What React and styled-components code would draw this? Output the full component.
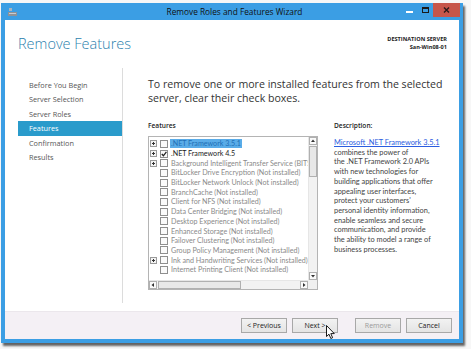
import React from 'react';
import styled, { createGlobalStyle } from 'styled-components';

const Global = createGlobalStyle`
  html, body {
    margin: 0;
    padding: 0;
    background: #ffffff;
    overflow: hidden;
  }
  body {
    font-family: "Open Sans", "Noto Sans", sans-serif;
  }
`;

const Screen = styled.div`
  width: 471px;
  height: 349px;
  padding: 3px 0 0 1px;
  box-sizing: border-box;
  background: #f7f7f7;
  position: relative;
`;

const Window = styled.div`
  width: 462px;
  height: 340px;
  background: #3b9ee4;
  padding: 0 4px 4px 4px;
  box-sizing: border-box;
  display: flex;
  flex-direction: column;
  box-shadow: 2px 3px 2px rgba(0, 0, 0, 0.6);
`;

const TitleBar = styled.div`
  height: 17px;
  display: flex;
  align-items: center;
  position: relative;
`;

const AppIcon = styled.div`
  width: 10px;
  display: flex;
  align-items: center;
  margin-left: 3px;
`;

const Title = styled.div`
  flex: 1;
  text-align: center;
  font-size: 8.3px;
  color: #111;
  padding-left: 50px;
`;

const Caption = styled.div`
  display: flex;
  align-items: flex-start;
  height: 100%;
  margin-right: -1px;
`;

const CaptionButton = styled.div`
  width: ${(p) => (p.$close ? '27px' : '16px')};
  height: 14px;
  display: flex;
  align-items: center;
  justify-content: center;
  background: ${(p) => (p.$close ? '#c7564a' : 'transparent')};
`;

const Client = styled.div`
  flex: 1;
  background: #fff;
  display: flex;
  flex-direction: column;
`;

const Header = styled.div`
  height: 48px;
  display: flex;
  justify-content: space-between;
  align-items: flex-start;
  padding: 0 12px 0 13px;
`;

const Heading = styled.h1`
  margin: 14px 0 0 0;
  font-weight: 300;
  font-size: 14.5px;
  color: #2c7fae;
`;

const Dest = styled.div`
  margin-top: 15px;
  text-align: right;
  font-size: 5.6px;
  font-weight: 700;
  color: #222;
  line-height: 8px;
`;

const Body = styled.div`
  flex: 1;
  display: flex;
`;

const Nav = styled.div`
  width: 104px;
  flex-shrink: 0;
  margin-left: 13px;
  padding-top: 10px;
  border-right: 1px solid #dcdcdc;
  margin-bottom: 8px;
`;

const NavItem = styled.div`
  height: 14.4px;
  line-height: 14.4px;
  padding-left: 11px;
  font-size: 7.3px;
  color: ${(p) => (p.$active ? '#fff' : '#555')};
  background: ${(p) => (p.$active ? '#2a9bcb' : 'transparent')};
`;

const Main = styled.div`
  flex: 1;
  min-width: 0;
  padding: 9px 0 0 25px;
`;

const Intro = styled.p`
  margin: 0;
  font-size: 10.6px;
  line-height: 14px;
  color: #333;
  width: 300px;
`;

const Columns = styled.div`
  display: flex;
  margin-top: 16px;
`;

const FeatureCol = styled.div`
  width: 170px;
  flex-shrink: 0;
`;

const Label = styled.div`
  font-size: 6.6px;
  font-weight: 600;
  color: #222;
  height: 15px;
`;

const TreeBox = styled.div`
  width: 170px;
  height: 154px;
  border: 1px solid #b4b4b4;
  box-sizing: border-box;
  display: grid;
  grid-template-columns: minmax(0, 1fr) 9px;
  grid-template-rows: minmax(0, 1fr) 9px;
  background: #fff;
`;

const TreeList = styled.div`
  overflow: hidden;
  padding: 2px 0 0 1px;
`;

const Row = styled.div`
  height: 9.7px;
  display: flex;
  align-items: center;
  white-space: nowrap;
  font-family: Lato, "Open Sans", sans-serif;
  font-size: 7.15px;
  color: ${(p) => (p.$dark ? '#1a1a1a' : '#8a8a8a')};
`;

const Expander = styled.div`
  width: 10px;
  flex-shrink: 0;
  display: flex;
  align-items: center;
`;

const Check = styled.div`
  width: 6px;
  height: 6px;
  flex-shrink: 0;
  border: 1px solid #8e8e8e;
  background: #fafafa;
  margin-right: 2px;
  display: flex;
  align-items: center;
  justify-content: center;
`;

const RowText = styled.span`
  padding: 0 1px;
  background: ${(p) => (p.$selected ? '#5aace8' : 'transparent')};
  color: ${(p) => (p.$selected ? '#1f6fb5' : 'inherit')};
`;

const VScroll = styled.div`
  background: #f2f2f2;
  border-left: 1px solid #e6e6e6;
  display: flex;
  flex-direction: column;
`;

const HScroll = styled.div`
  background: #f2f2f2;
  border-top: 1px solid #e6e6e6;
  display: flex;
`;

const Corner = styled.div`
  background: #f0f0f0;
`;

const Arrow = styled.div`
  width: 8px;
  height: 8px;
  flex-shrink: 0;
  box-sizing: border-box;
  border: 1px solid #b0b0b0;
  background: #fafafa;
  display: flex;
  align-items: center;
  justify-content: center;
`;

const VThumb = styled.div`
  height: 31px;
  margin: 1px 0;
  background: #e8e8e8;
  border: 1px solid #b0b0b0;
  box-sizing: border-box;
`;

const HThumb = styled.div`
  width: 83px;
  margin: 0 1px;
  background: #e8e8e8;
  border: 1px solid #b0b0b0;
  box-sizing: border-box;
`;

const Spacer = styled.div`
  flex: 1;
`;

const DescCol = styled.div`
  margin-left: 16px;
  width: 120px;
  flex-shrink: 0;
`;

const DescText = styled.div`
  font-family: Lato, "Open Sans", sans-serif;
  font-size: 7.4px;
  line-height: 9.7px;
  color: #444;
  margin-top: 2px;
  white-space: nowrap;
`;

const Link = styled.a`
  color: #2a5de0;
  text-decoration: underline;
`;

const Footer = styled.div`
  height: 27px;
  background: #f4f0f5;
  border-top: 1px solid #ebe7ec;
  display: flex;
  align-items: center;
  justify-content: flex-end;
  padding-right: 7px;
  gap: 5px;
`;

const Button = styled.div`
  width: 46px;
  height: 15px;
  box-sizing: border-box;
  border: 1px solid #a8a8a8;
  background: linear-gradient(#f2f2f2, #e4e4e4);
  font-size: 7px;
  display: flex;
  align-items: center;
  justify-content: center;
  color: ${(p) => (p.$disabled ? '#9a9a9a' : '#222')};
  margin-left: ${(p) => (p.$gap ? '12px' : '0')};
`;

const Cursor = styled.svg`
  position: absolute;
  left: 326px;
  top: 325px;
`;

const features = [
  { name: '.NET Framework 3.5.1', exp: true, selected: true },
  { name: '.NET Framework 4.5', exp: true, checked: true, dark: true },
  { name: 'Background Intelligent Transfer Service (BITS)', exp: true },
  { name: 'BitLocker Drive Encryption (Not installed)' },
  { name: 'BitLocker Network Unlock (Not installed)' },
  { name: 'BranchCache (Not installed)' },
  { name: 'Client for NFS (Not installed)' },
  { name: 'Data Center Bridging (Not installed)' },
  { name: 'Desktop Experience (Not installed)' },
  { name: 'Enhanced Storage (Not installed)' },
  { name: 'Failover Clustering (Not installed)' },
  { name: 'Group Policy Management (Not installed)' },
  { name: 'Ink and Handwriting Services (Not installed)', exp: true },
  { name: 'Internet Printing Client (Not installed)' },
];

const desc = [
  'combines the power of',
  'the .NET Framework 2.0 APIs',
  'with new technologies for',
  'building applications that offer',
  'appealing user interfaces,',
  "protect your customers'",
  'personal identity information,',
  'enable seamless and secure',
  'communication, and provide',
  'the ability to model a range of',
  'business processes.',
];

const steps = ['Before You Begin', 'Server Selection', 'Server Roles', 'Features', 'Confirmation', 'Results'];

const PlusBox = () => (
  <svg width="7" height="7" viewBox="0 0 7 7">
    <rect x="0.5" y="0.5" width="6" height="6" fill="#f4f4f4" stroke="#9a9a9a" />
    <path d="M2 3.5h3M3.5 2v3" stroke="#333" strokeWidth="1" />
  </svg>
);

const Tri = ({ dir }) => {
  const d = {
    up: 'M1 4L3 1.5 5 4z',
    down: 'M1 2L3 4.5 5 2z',
    left: 'M4 1L1.5 3 4 5z',
    right: 'M2 1L4.5 3 2 5z',
  }[dir];
  return (
    <svg width="6" height="6" viewBox="0 0 6 6">
      <path d={d} fill="#333" />
    </svg>
  );
};

export default function App() {
  return (
    <Screen>
      <Global />
      <Window>
        <TitleBar>
          <AppIcon>
            <svg width="9" height="8" viewBox="0 0 9 8">
              <rect x="1" y="0" width="3" height="3" fill="#a8b4c0" />
              <rect x="0" y="4" width="9" height="4" fill="#8d9299" />
              <rect x="1" y="5" width="7" height="1" fill="#c6ccd2" />
            </svg>
          </AppIcon>
          <Title>Remove Roles and Features Wizard</Title>
          <Caption>
            <CaptionButton>
              <svg width="7" height="7" viewBox="0 0 7 7">
                <rect x="0" y="4" width="7" height="2" fill="#fff" />
              </svg>
            </CaptionButton>
            <CaptionButton>
              <svg width="7" height="7" viewBox="0 0 7 7">
                <rect x="0.5" y="0.5" width="6" height="5" fill="none" stroke="#1a1a1a" />
                <rect x="0.5" y="0.5" width="6" height="1.5" fill="#1a1a1a" />
              </svg>
            </CaptionButton>
            <CaptionButton $close>
              <svg width="7" height="6" viewBox="0 0 7 6">
                <path d="M1 0.5L6 5.5M6 0.5L1 5.5" stroke="#2a1a1a" strokeWidth="1.4" />
              </svg>
            </CaptionButton>
          </Caption>
        </TitleBar>
        <Client>
          <Header>
            <Heading>Remove Features</Heading>
            <Dest>
              DESTINATION SERVER
              <br />
              San-Win08-01
            </Dest>
          </Header>
          <Body>
            <Nav>
              {steps.map((s) => (
                <NavItem key={s} $active={s === 'Features'}>
                  {s}
                </NavItem>
              ))}
            </Nav>
            <Main>
              <Intro>
                To remove one or more installed features from the selected server, clear their check boxes.
              </Intro>
              <Columns>
                <FeatureCol>
                  <Label>Features</Label>
                  <TreeBox>
                    <TreeList>
                      {features.map((f) => (
                        <Row key={f.name} $dark={f.dark}>
                          <Expander>{f.exp && <PlusBox />}</Expander>
                          <Check>
                            {f.checked && (
                              <svg width="6" height="6" viewBox="0 0 6 6">
                                <path d="M0.8 3L2.4 4.8 5.4 0.8" fill="none" stroke="#222" strokeWidth="1.3" />
                              </svg>
                            )}
                          </Check>
                          <RowText $selected={f.selected}>{f.name}</RowText>
                        </Row>
                      ))}
                    </TreeList>
                    <VScroll>
                      <Arrow>
                        <Tri dir="up" />
                      </Arrow>
                      <VThumb />
                      <Spacer />
                      <Arrow>
                        <Tri dir="down" />
                      </Arrow>
                    </VScroll>
                    <HScroll>
                      <Arrow>
                        <Tri dir="left" />
                      </Arrow>
                      <HThumb />
                      <Spacer />
                      <Arrow>
                        <Tri dir="right" />
                      </Arrow>
                    </HScroll>
                    <Corner />
                  </TreeBox>
                </FeatureCol>
                <DescCol>
                  <Label>Description:</Label>
                  <DescText>
                    <Link>Microsoft .NET Framework 3.5.1</Link>
                    {desc.map((l) => (
                      <div key={l}>{l}</div>
                    ))}
                  </DescText>
                </DescCol>
              </Columns>
            </Main>
          </Body>
          <Footer>
            <Button>&lt; Previous</Button>
            <Button>Next &gt;</Button>
            <Button $disabled $gap>
              Remove
            </Button>
            <Button>Cancel</Button>
          </Footer>
        </Client>
      </Window>
      <Cursor width="10" height="15" viewBox="0 0 10 15">
        <path d="M0.5 0.5V11.5L3 9.2 4.8 13.5 6.6 12.7 4.8 8.6H8.3Z" fill="#fff" stroke="#000" strokeWidth="0.9" />
      </Cursor>
    </Screen>
  );
}
